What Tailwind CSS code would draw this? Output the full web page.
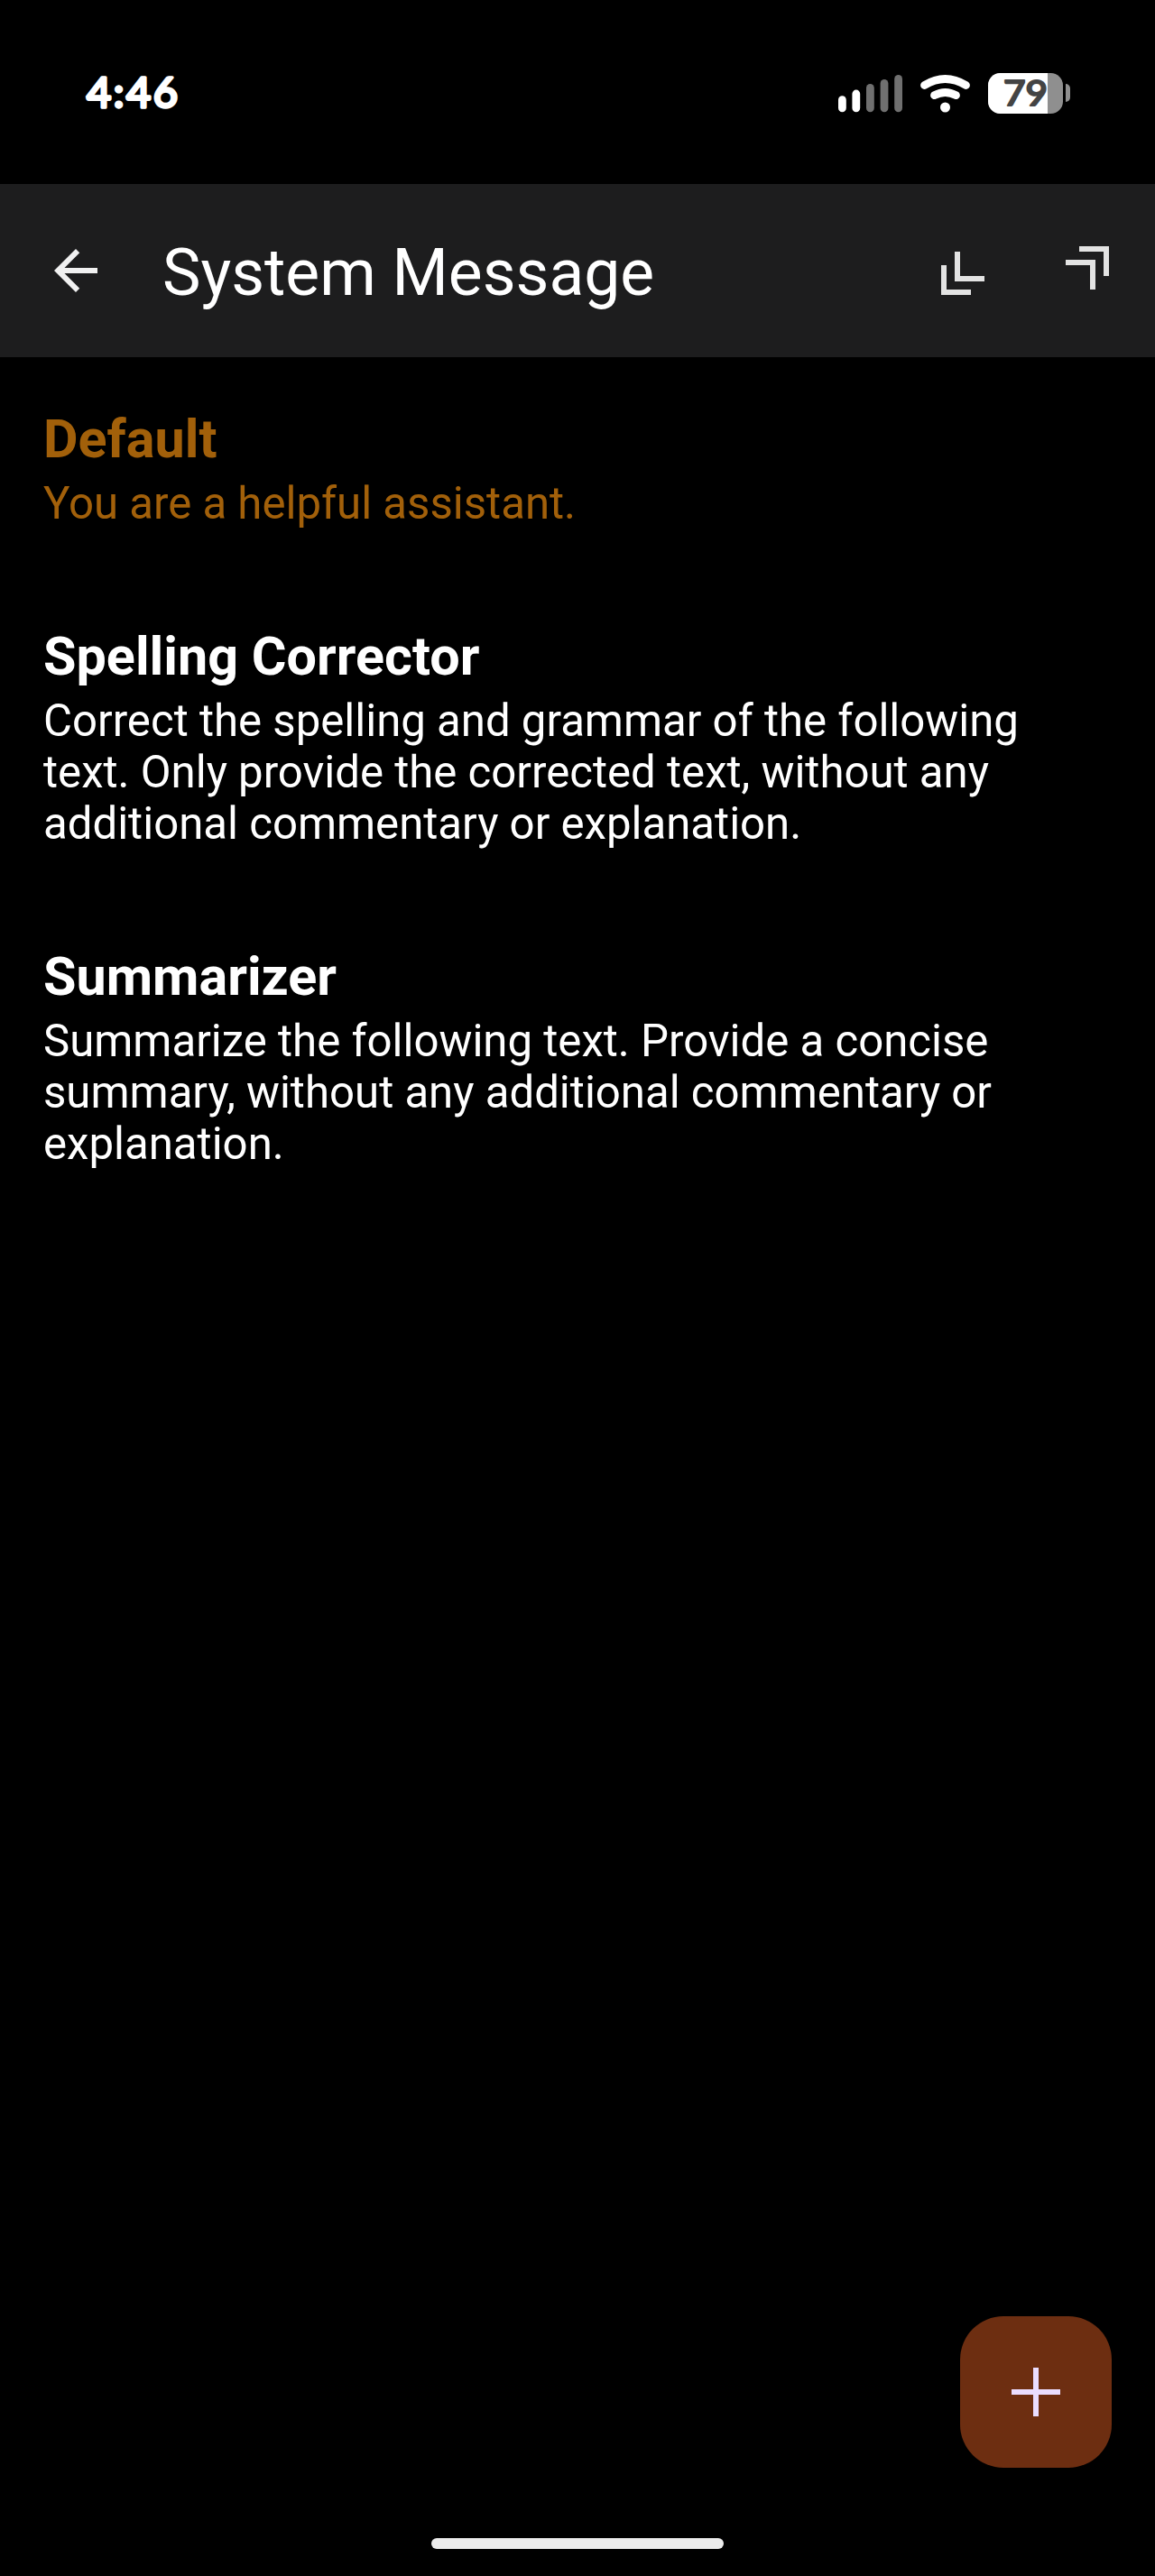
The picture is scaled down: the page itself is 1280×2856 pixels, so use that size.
<!DOCTYPE html>
<html lang="en">
<head>
<meta charset="utf-8">
<title>System Message</title>
<script src="https://cdn.jsdelivr.net/npm/@tailwindcss/browser@4"></script>
</head>
<body class="bg-black">
<div class="relative flex h-[2856px] w-[1280px] flex-col overflow-hidden bg-black font-[Roboto,sans-serif] text-white">
  <!-- Status bar -->
  <div class="flex h-[204px] shrink-0 items-start justify-between pt-[72px] pr-[92px] pl-[92px]">
    <svg class="h-[60px] w-[120px]" viewBox="92 72 120 60" aria-label="Time">
      <text x="96" y="119" textLength="101" lengthAdjust="spacing" fill="#fff" stroke="#fff" stroke-width="3.4" stroke-linejoin="round" font-family="Lato, sans-serif" font-weight="400" font-size="47">4:46</text>
    </svg>
    <svg class="h-[60px] w-[260px]" viewBox="928 72 260 60" aria-label="Signal, Wi-Fi and battery">
      <g fill="#fff">
        <rect x="929" y="106.3" width="8.8" height="17.9" rx="4.4"/>
        <rect x="944.4" y="99.6" width="8.8" height="24.6" rx="4.4"/>
      </g>
      <g fill="#707070">
        <rect x="960" y="93" width="8.8" height="31.2" rx="4.4"/>
        <rect x="975.6" y="88" width="8.8" height="36.2" rx="4.4"/>
        <rect x="991.2" y="83" width="8.8" height="41.2" rx="4.4"/>
      </g>
      <g fill="none" stroke="#fff" stroke-width="8.8" stroke-linecap="round">
        <path d="M1024.5 94.5Q1047.5 80.4 1070.5 94.5"/>
        <path d="M1035.5 105.7Q1047.5 99.2 1059.5 105.7"/>
      </g>
      <circle cx="1047.5" cy="119" r="5.5" fill="#fff"/>
      <rect x="1095" y="81" width="83" height="45" rx="13.5" fill="#8f8f8f"/>
      <path d="M1108.5 81H1161V126H1108.5A13.5 13.5 0 0 1 1095 112.5V94.5A13.5 13.5 0 0 1 1108.5 81Z" fill="#fff"/>
      <path d="M1181 93a5 5 0 0 1 5 5v10a5 5 0 0 1-5 5Z" fill="#8f8f8f"/>
      <text x="1112" y="117" textLength="49" lengthAdjust="spacingAndGlyphs" fill="#444" stroke="#444" stroke-width="2.2" stroke-linejoin="round" font-family="Lato, sans-serif" font-weight="400" font-size="38">79</text>
    </svg>
  </div>

  <!-- App bar -->
  <header class="flex h-48 shrink-0 items-center bg-[#1d1d1e] pr-9 pl-12">
    <svg class="size-18" viewBox="0 0 24 24" fill="#f1f1f1"><path d="M20 11H7.830l5.590-5.590L12 4l-8 8 8 8 1.410-1.410L7.830 13H20v-2z"/></svg>
    <h1 class="ml-[60px] flex-1 pt-[5px] text-[71.4px] leading-[84px]">System Message</h1>
    <div class="flex gap-18">
      <svg class="size-18" viewBox="0 0 24 24" fill="#e3e3e3"><path d="M10 5h2v9h9v2H10zM5 10h2v9h9v2H5z"/></svg>
      <svg class="size-18" viewBox="0 0 24 24" fill="#e3e3e3"><path d="M8 3h11v11h-2V5H8zM3 8h11v11h-2v-9H3z"/></svg>
    </div>
  </header>

  <!-- Message presets -->
  <main class="flex flex-1 flex-col gap-[106px] px-12 pt-14">
    <section class="text-[#a2600a]">
      <h2 class="text-[59.3px] leading-[70px] font-bold">Default</h2>
      <p class="mt-2 text-[49.15px] leading-[57px]">You are a helpful assistant.</p>
    </section>
    <section>
      <h2 class="text-[59.3px] leading-[70px] font-bold">Spelling Corrector</h2>
      <p class="mt-2 text-[49.15px] leading-[57px]">Correct the spelling and grammar of the following<br>text. Only provide the corrected text, without any<br>additional commentary or explanation.</p>
    </section>
    <section>
      <h2 class="text-[59.3px] leading-[70px] font-bold">Summarizer</h2>
      <p class="mt-2 text-[49.15px] leading-[57px]">Summarize the following text. Provide a concise<br>summary, without any additional commentary or<br>explanation.</p>
    </section>
  </main>

  <!-- Home indicator -->
  <div class="mx-auto mb-[30px] h-3 w-[324px] shrink-0 rounded-full bg-[#ebebeb]"></div>

  <!-- Add button -->
  <button class="absolute right-12 bottom-[120px] flex size-[168px] items-center justify-center rounded-[48px] bg-[#6d2e11]" aria-label="Add">
    <svg class="size-[54px]" viewBox="0 0 18 18" fill="#eaddff"><path d="M8 0h2v8h8v2h-8v8H8v-8H0V8h8z"/></svg>
  </button>
</div>
</body>
</html>
